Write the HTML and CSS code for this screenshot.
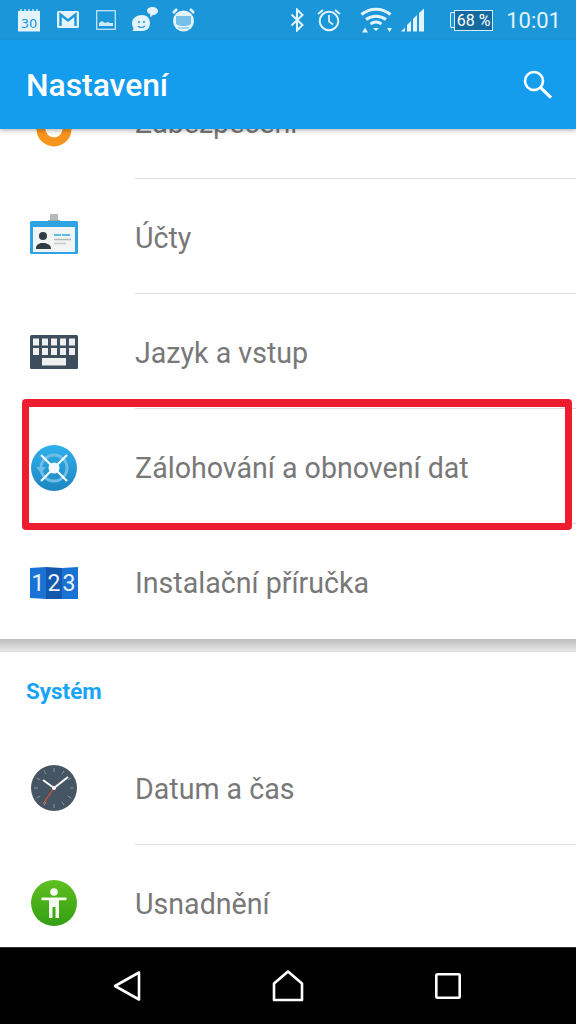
FILE: index.html
```html
<!DOCTYPE html>
<html lang="cs">
<head>
  <meta charset="UTF-8" />
  <title>Nastavení</title>
  <link rel="stylesheet" href="styles.css">
</head>
<body>
  <div class="phone">

    <!-- status bar -->
    <div class="status-bar">
      <div class="status-left">
        <svg class="st-cal" width="24" height="24" viewBox="0 0 24 24">
          <path d="M1 3h22v20.500H1z" fill="#e3f3fc"/>
          <path d="M4 1v3M8 1v3M12 1v3M16 1v3M20 1v3" stroke="#e3f3fc" stroke-width="1.300"/>
          <text x="12" y="19.500" class="st-cal-num">30</text>
        </svg>
        <svg class="st-mail" width="24" height="20" viewBox="0 0 24 20">
          <rect x="1" y="1" width="22" height="17" rx="1.500" fill="#e3f3fc"/>
          <path d="M4.500 16V4.500L12 10.500l7.500-6V16" fill="none" stroke="#1a96d9" stroke-width="2.400"/>
        </svg>
        <svg class="st-pic" width="20" height="20" viewBox="0 0 20 20">
          <rect x=".7" y=".7" width="18.600" height="18.600" fill="none" stroke="#cfeafa" stroke-width="1.200"/>
          <path d="M3 16v-3l3-2 3 2 3-1 2 1 3 0v3z" fill="#cfeafa"/>
        </svg>
        <svg class="st-chat" width="27" height="26" viewBox="0 0 27 26">
          <path d="M11 8c5 0 8 3 8 8s-3 8-8 8H1c2-1 1.500-2 1-4-1-1-1-3-1-4 0-5 5-8 10-8z" fill="#e3f3fc"/>
          <circle cx="8" cy="15" r="1" fill="#1a96d9"/><circle cx="13" cy="15" r="1" fill="#1a96d9"/>
          <path d="M7 19c2 2 5 2 7 0" fill="none" stroke="#1a96d9" stroke-width="1.100"/>
          <path d="M21 0c3 0 6 1.500 6 4s-3 4-5 4c-1 1-2 2-3 2 .5-1 .5-2 0-3-2-.5-3-2-3-3 0-3 3-4 5-4z" fill="#e3f3fc"/>
        </svg>
        <svg class="st-dnd" width="23" height="26" viewBox="0 0 23 26">
          <circle cx="11.500" cy="14" r="10.500" fill="#e3f3fc"/>
          <path d="M1 6l4-4M22 6l-4-4" stroke="#e3f3fc" stroke-width="2.500"/>
          <path d="M4 9h15v7c0 2-3 3-7.500 3S4 18 4 16z" fill="#1a96d9" opacity=".55"/>
          <path d="M6 21l11 0" stroke="#1a96d9" stroke-width="1" opacity=".6"/>
        </svg>
      </div>
      <div class="status-right">
        <svg class="st-bt" width="15" height="24" viewBox="0 0 15 24">
          <path d="M1.500 6.500l11 10.500-5.500 5.500V1.500L12.500 7 1.500 17.500" fill="none" stroke="#e3f3fc" stroke-width="2"/>
        </svg>
        <svg class="st-alarm" width="24" height="24" viewBox="0 0 24 24">
          <circle cx="12" cy="13" r="9.300" fill="none" stroke="#e3f3fc" stroke-width="2"/>
          <path d="M12 7v6.500l4 3" fill="none" stroke="#e3f3fc" stroke-width="1.700"/>
          <path d="M1 6l5-4M23 6l-5-4" stroke="#e3f3fc" stroke-width="2"/>
        </svg>
        <svg class="st-wifi" width="32" height="26" viewBox="0 0 32 26">
          <path d="M1.500 7.500C10 .5 22 .5 30.500 7.500" fill="none" stroke="#e3f3fc" stroke-width="3.200"/>
          <path d="M6 12.500c6-4.500 14-4.500 20 0" fill="none" stroke="#e3f3fc" stroke-width="3"/>
          <path d="M10.500 17c3.500-2.500 7.500-2.500 11 0" fill="none" stroke="#e3f3fc" stroke-width="2.800"/>
          <path d="M13 21h6l-3 3z M2 25.500l3-5 3 5z M27 21h5l-2.500 4z" fill="#e3f3fc"/>
        </svg>
        <svg class="st-signal" width="24" height="24" viewBox="0 0 24 24">
          <path d="M0 23.500l4-4v4zM6 23.500V17l4-4v10.500zM12 23.500V11l4-4v16.500zM18 23.500V5l5-4.500v23z" fill="#e3f3fc"/>
        </svg>
        <div class="battery">
          <span class="battery-nub"></span>
          <span class="battery-body">68 %</span>
        </div>
        <span class="clock">10:01</span>
      </div>
    </div>

    <!-- app bar -->
    <header class="app-bar">
      <h1 class="app-title">Nastavení</h1>
      <svg class="search" width="30" height="30" viewBox="0 0 30 30">
        <circle cx="11" cy="11" r="9" fill="none" stroke="#fff" stroke-width="2.600"/>
        <path d="M17.600 17.600l10.400 10" stroke="#fff" stroke-width="3.200"/>
      </svg>
    </header>

    <!-- settings list -->
    <main class="content">
      <div class="scroll">
        <section class="group">
          <div class="row">
            <div class="row-icon">
              <svg class="icon-ring" width="36" height="50" viewBox="0 0 36 50">
                <circle cx="18" cy="32" r="13" fill="none" stroke="#f7941e" stroke-width="9"/>
              </svg>
            </div>
            <div class="row-label">Zabezpečení</div>
          </div>

          <div class="row">
            <div class="row-icon">
              <svg width="48" height="46" viewBox="0 0 48 46">
                <rect x="20" y="0" width="8" height="9" fill="#b5b9bb"/>
                <rect x="18" y="6" width="12" height="4" fill="#9ea3a6"/>
                <rect x="0" y="7" width="48" height="33" rx="1.500" fill="#2ea3e3"/>
                <rect x="3" y="13" width="42" height="25" fill="#f2f3f3"/>
                <circle cx="13" cy="22" r="4" fill="#2f3c46"/>
                <path d="M6 35c0-5 3-5 5-6h4c2 1 6 1 6 6z" fill="#2f3c46"/>
                <path d="M24 21h7M32 21h8" stroke="#2ea8ea" stroke-width="1.500"/>
                <path d="M24 25.500h17" stroke="#b7babb" stroke-width="1.500"/>
                <path d="M24 29.500h12" stroke="#c6c9ca" stroke-width="1.500"/>
              </svg>
            </div>
            <div class="row-label">Účty</div>
          </div>

          <div class="row">
            <div class="row-icon">
              <svg width="48" height="34" viewBox="0 0 48 34">
                <rect width="48" height="34" rx="1.500" fill="#3d4d5c"/>
                <g fill="#eef0f1">
                  <rect x="3" y="3.500" width="6" height="7"/><rect x="12" y="3.500" width="6" height="7"/><rect x="21" y="3.500" width="6" height="7"/><rect x="30" y="3.500" width="6" height="7"/><rect x="39" y="3.500" width="6" height="7"/>
                  <rect x="3" y="13" width="6" height="7"/><rect x="12" y="13" width="6" height="7"/><rect x="21" y="13" width="6" height="7"/><rect x="30" y="13" width="6" height="7"/><rect x="39" y="13" width="6" height="7"/>
                  <rect x="12" y="23" width="24" height="7.500"/>
                </g>
              </svg>
            </div>
            <div class="row-label">Jazyk a vstup</div>
          </div>

          <div class="row">
            <div class="row-icon">
              <svg class="icon-round" width="46" height="48" viewBox="0 -2 46 48">
                <defs>
                  <linearGradient id="backupFill" x1="0" y1="0" x2="0" y2="1">
                    <stop offset="0" stop-color="#2fb0ec"/><stop offset="1" stop-color="#1c86c0"/>
                  </linearGradient>
                </defs>
                <circle cx="23" cy="23" r="23" fill="url(#backupFill)"/>
                <circle cx="23" cy="23" r="13" fill="none" stroke="#6fbde6" stroke-width="3"/>
                <path d="M5 22h10l-5 6z" fill="#6fbde6"/>
                <path d="M10 10l26 26M36 10L10 36" stroke="#f4fafd" stroke-width="2.200"/>
                <circle cx="23" cy="23" r="5.500" fill="#f4fafd"/>
              </svg>
            </div>
            <div class="row-label">Zálohování a obnovení dat</div>
            <div class="highlight"></div>
          </div>

          <div class="row row-last">
            <div class="row-icon">
              <svg width="48" height="36" viewBox="0 -2 48 36">
                <path d="M0 2l16-1v32L0 32z" fill="#1a73d4"/>
                <path d="M16 1l16 1v31l-16 0z" fill="#1259ad"/>
                <path d="M32 2l16-1v32l-16 0z" fill="#1a73d4"/>
                <text x="8" y="25" class="icon-num">1</text>
                <text x="24" y="25" class="icon-num">2</text>
                <text x="39" y="25" class="icon-num">3</text>
              </svg>
            </div>
            <div class="row-label">Instalační příručka</div>
          </div>
        </section>

        <div class="group-gap"></div>

        <section class="group">
          <div class="group-title">Systém</div>

          <div class="row">
            <div class="row-icon">
              <svg class="icon-round" width="46" height="46" viewBox="0 0 46 46">
                <circle cx="23" cy="23" r="23" fill="#465564"/>
                <g stroke="#8a96a1" stroke-width="1">
                  <path d="M23 3v4M23 39v4M3 23h4M39 23h4M13 5.700l2 3.500M31 36.800l2 3.500M33 5.700l-2 3.500M15 36.800l-2 3.500M5.700 13l3.500 2M36.800 31l3.500 2M40.300 13l-3.500 2M9.200 31l-3.500 2"/>
                </g>
                <path d="M23 23l-11-8M23 23l14-11" stroke="#fff" stroke-width="2"/>
                <path d="M23 23l-11 16" stroke="#d9552b" stroke-width="1.200"/>
                <circle cx="23" cy="23" r="2" fill="#fff"/>
              </svg>
            </div>
            <div class="row-label">Datum a čas</div>
          </div>

          <div class="row row-last">
            <div class="row-icon">
              <svg class="icon-round" width="46" height="46" viewBox="0 0 46 46">
                <defs>
                  <linearGradient id="a11yFill" x1="0" y1="0" x2="0" y2="1">
                    <stop offset="0" stop-color="#5fbf1f"/><stop offset="1" stop-color="#339f14"/>
                  </linearGradient>
                </defs>
                <circle cx="23" cy="23" r="23" fill="url(#a11yFill)"/>
                <circle cx="23" cy="12" r="3.800" fill="#f6fbf2"/>
                <path d="M10.500 17.500h25v2.800h-7.500V38h-3.500V27h-3v11H18V20.300h-7.500z" fill="#f6fbf2"/>
              </svg>
            </div>
            <div class="row-label">Usnadnění</div>
          </div>
        </section>
      </div>
    </main>

    <!-- nav bar -->
    <nav class="nav-bar">
      <svg width="28" height="32" viewBox="0 0 28 32">
        <path d="M2 16L26 2.500v27z" fill="none" stroke="#fff" stroke-width="2.600" stroke-linejoin="round"/>
      </svg>
      <svg width="32" height="32" viewBox="0 0 32 32">
        <path d="M2 30V13.500L16 1.500l14 12V30z" fill="none" stroke="#fff" stroke-width="2.600" stroke-linejoin="round"/>
      </svg>
      <svg width="26" height="26" viewBox="0 0 26 26">
        <rect x="1.300" y="1.300" width="23.400" height="23.400" rx="1" fill="none" stroke="#fff" stroke-width="2.600"/>
      </svg>
    </nav>
  </div>
</body>
</html>
```

FILE: styles.css
```css
* { box-sizing: border-box; margin: 0; padding: 0; }

body {
  font-family: Roboto, sans-serif;
  background: #fff;
}

.phone {
  width: 576px;
  height: 1024px;
  display: flex;
  flex-direction: column;
  overflow: hidden;
}

/* Status bar */
.status-bar {
  height: 40px;
  flex: none;
  background: #1a96d9;
  display: flex;
  justify-content: space-between;
  align-items: center;
  padding: 0 15px 0 17px;
  color: #e3f3fc;
}

.status-left, .status-right {
  display: flex;
  align-items: center;
}

.st-mail { margin-left: 15px; }
.st-pic { margin-left: 16px; }
.st-chat { margin-left: 15px; }
.st-dnd { margin-left: 14px; }
.st-alarm { margin-left: 12px; }
.st-wifi { margin-left: 19px; }
.st-signal { margin-left: 9px; }

.st-cal-num {
  font-family: "DejaVu Sans", sans-serif;
  font-size: 13px;
  fill: #1a96d9;
  text-anchor: middle;
}

.battery {
  display: flex;
  align-items: center;
  margin-left: 25px;
}

.battery-nub {
  width: 4px;
  height: 16px;
  border: 1px solid #e3f3fc;
  border-right: none;
  border-radius: 2px 0 0 2px;
}

.battery-body {
  width: 39px;
  height: 21px;
  background: #146a9f;
  border: 1px solid #d5ecf9;
  font-size: 16px;
  line-height: 19px;
  text-align: center;
  white-space: nowrap;
  color: #fff;
}

.clock {
  font-size: 22px;
  margin-left: 13px;
  white-space: nowrap;
}

/* App bar */
.app-bar {
  height: 89px;
  flex: none;
  background: #149ced;
  display: flex;
  justify-content: space-between;
  align-items: center;
  padding: 0 23px 0 26px;
  position: relative;
  z-index: 2;
  box-shadow: 0 2px 4px rgba(0,0,0,.25);
}

.app-title {
  font-size: 31.8px;
  font-weight: 500;
  color: #fff;
}

/* List */
.content {
  flex: 1;
  overflow: hidden;
  background: #fff;
}

.scroll { margin-top: -65px; }

.row {
  height: 115px;
  display: flex;
  align-items: center;
  position: relative;
}

.row-icon {
  width: 135px;
  flex: none;
  padding-left: 30px;
  display: flex;
  align-items: center;
}

.row-icon svg { display: block; }
.icon-round { margin-left: 1px; }
.icon-ring { margin-left: 6px; }

.row-label {
  flex: 1;
  height: 100%;
  display: flex;
  align-items: center;
  padding-top: 3px;
  font-size: 28.6px;
  color: #787878;
  border-bottom: 1px solid #dedede;
}

.row-last .row-label { border-bottom: none; }

.highlight {
  position: absolute;
  left: 22px;
  right: 4px;
  top: -10px;
  bottom: -6px;
  border: 7px solid #ed1c2e;
  border-top-width: 8px;
  border-radius: 4px;
}

.icon-num {
  font-family: Roboto, sans-serif;
  font-size: 23px;
  fill: #e8f1fb;
  text-anchor: middle;
}

.group-gap {
  height: 13px;
  background: linear-gradient(#bdbdbd, #e6e6e6);
  border-bottom: 1px solid #e0e0e0;
}

.group-title {
  height: 78px;
  padding: 26px 0 0 26px;
  font-size: 22.4px;
  font-weight: 700;
  color: #18a4f5;
}

/* Nav bar */
.nav-bar {
  height: 77px;
  flex: none;
  background: #000;
  border-top: 1px solid #333;
  display: flex;
  align-items: center;
  padding-left: 113px;
  gap: 131px;
}
```
